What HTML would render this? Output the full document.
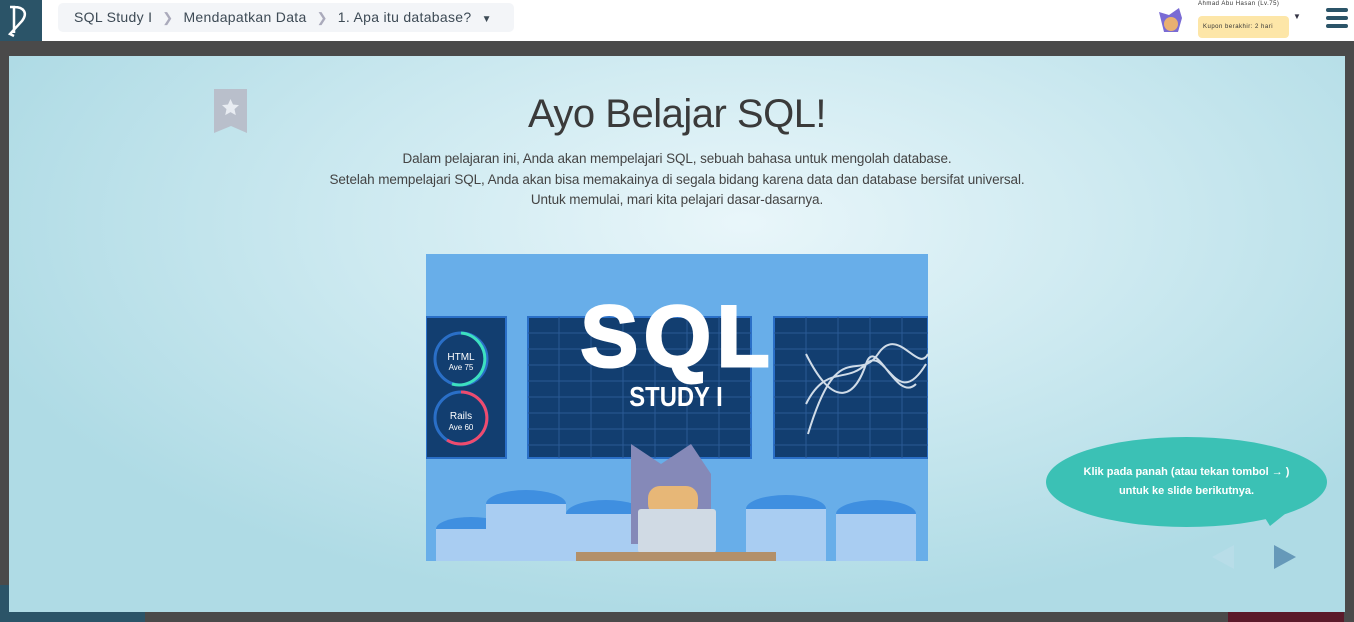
<!DOCTYPE html>
<html><head><meta charset="utf-8"><style>
*{margin:0;padding:0;box-sizing:border-box}
body{width:1354px;height:622px;overflow:hidden;background:#4a4a4a;font-family:"Liberation Sans",sans-serif;position:relative}
.top{position:absolute;left:0;top:0;width:1354px;height:41px;background:#fff}
.logo{position:absolute;left:0;top:0;width:42px;height:41px;background:#2b5468}
.crumb{position:absolute;left:58px;top:3px;width:456px;height:29px;background:#f3f5f8;border-radius:5px;font-size:14px;color:#3d4a55;line-height:29px;padding-left:16px;letter-spacing:.3px}
.crumb .sep{color:#aab;margin:0 10px;font-size:13px}
.modal{position:absolute;left:9px;top:56px;width:1336px;height:556px;background:radial-gradient(ellipse 60% 70% at 55% 30%,#e9f6fa 0%,#cce9f0 50%,#afdbe5 100%)}
h1{position:absolute;left:0;width:1354px;top:92px;text-align:center;font-weight:normal;font-size:40px;color:#3a3a3a;letter-spacing:-.5px}
.desc{position:absolute;left:0;width:1354px;top:149px;text-align:center;font-size:13.5px;color:#444;line-height:20.5px;letter-spacing:-.1px}
.bubble{position:absolute;left:1046px;top:437px;width:281px;height:90px;background:#3bc1b5;border-radius:50%;color:#fff;font-size:11px;font-weight:bold;text-align:center;padding-top:26px;line-height:19px}
</style></head><body>
<div class="top"></div>
<div class="logo"><svg width="42" height="41"><path d="M10 7h4v26M14 7c10 0 14 6 8 14l-12 13 4 2" stroke="#fff" stroke-width="2.5" fill="none"/></svg></div>
<div class="crumb">SQL Study I<span class="sep">❯</span>Mendapatkan Data<span class="sep">❯</span>1. Apa itu database? <span style="font-size:10px;margin-left:6px">▼</span></div>
<svg style="position:absolute;left:1156px;top:6px" width="32" height="30"><path d="M3 6l10 3 10-7 3 10-4 14H8L5 14z" fill="#7a6bd4"/><circle cx="15" cy="18" r="7" fill="#e9b071"/></svg>
<div style="position:absolute;left:1198px;top:1px;font-size:6px;color:#333;letter-spacing:.5px">Ahmad Abu Hasan (Lv.75)</div>
<div style="position:absolute;left:1198px;top:16px;width:91px;height:22px;background:#fde6a8;border-radius:4px;font-size:6px;line-height:22px;padding-left:5px;color:#333;letter-spacing:.5px">Kupon berakhir: 2 hari</div>
<div style="position:absolute;left:1293px;top:12px;font-size:8px;color:#334">▼</div>
<div style="position:absolute;left:1326px;top:8px;width:22px"><div style="height:4px;background:#2b5468;border-radius:2px;margin-bottom:4px"></div><div style="height:4px;background:#2b5468;border-radius:2px;margin-bottom:4px"></div><div style="height:4px;background:#2b5468;border-radius:2px"></div></div>
<div style="position:absolute;left:0;top:585px;width:145px;height:37px;background:#2b5468"></div>
<div style="position:absolute;left:1228px;top:597px;width:116px;height:25px;background:#5a1a2a"></div>
<div class="modal"></div>
<svg style="position:absolute;left:214px;top:89px" width="33" height="44"><path d="M0 0h33v44l-16-7-17 7z" fill="#b9bfcb"/><path d="M16.5 10l2.5 5.5 6 .6-4.5 4 1.3 6-5.3-3-5.3 3 1.3-6-4.5-4 6-.6z" fill="#e8ecf2"/></svg>
<h1>Ayo Belajar SQL!</h1>
<div class="desc">Dalam pelajaran ini, Anda akan mempelajari SQL, sebuah bahasa untuk mengolah database.<br>Setelah mempelajari SQL, Anda akan bisa memakainya di segala bidang karena data dan database bersifat universal.<br>Untuk memulai, mari kita pelajari dasar-dasarnya.</div>
<svg style="position:absolute;left:426px;top:254px" width="502" height="307">
<rect width="502" height="307" fill="#68aee9"/>
<rect x="0" y="63" width="80" height="141" fill="#123e70" stroke="#2a6fc7" stroke-width="2"/>
<circle cx="35" cy="105" r="26" fill="none" stroke="#2a6fc7" stroke-width="3"/><path d="M35 79a26 26 0 1 1-9 51" fill="none" stroke="#3de0c0" stroke-width="3"/>
<circle cx="35" cy="164" r="26" fill="none" stroke="#2a6fc7" stroke-width="3"/><path d="M35 138a26 26 0 1 1-14 48" fill="none" stroke="#ef4b6e" stroke-width="3"/>
<text x="35" y="106" fill="#fff" font-size="10" text-anchor="middle">HTML</text><text x="35" y="116" fill="#fff" font-size="8" text-anchor="middle">Ave 75</text>
<text x="35" y="165" fill="#fff" font-size="10" text-anchor="middle">Rails</text><text x="35" y="176" fill="#fff" font-size="8" text-anchor="middle">Ave 60</text>
<rect x="102" y="63" width="223" height="141" fill="#123e70" stroke="#2a6fc7" stroke-width="2"/>
<g stroke="#2a5a95" stroke-width="1"><path d="M102 79h223M102 95h223M102 111h223M102 127h223M102 143h223M102 159h223M102 175h223M102 191h223M133 63v141M165 63v141M197 63v141M229 63v141M261 63v141M293 63v141"/></g>
<rect x="348" y="63" width="154" height="141" fill="#123e70" stroke="#2a6fc7" stroke-width="2"/>
<g stroke="#2a5a95" stroke-width="1"><path d="M348 79h154M348 95h154M348 111h154M348 127h154M348 143h154M348 159h154M348 175h154M348 191h154M380 63v141M412 63v141M444 63v141M476 63v141"/></g>
<path d="M380 100c30 60 50 40 60 10s30 40 50 20M380 150c20-40 40-20 60-40s30 50 60 0M382 180c30-100 50-50 70-80s40 20 50 0" stroke="#d0dce8" stroke-width="2" fill="none"/>
<g fill="#3f8fe0"><ellipse cx="100" cy="250" rx="40" ry="14"/><ellipse cx="45" cy="275" rx="35" ry="12"/><ellipse cx="180" cy="260" rx="40" ry="14"/><ellipse cx="140" cy="285" rx="35" ry="12"/><ellipse cx="360" cy="255" rx="40" ry="14"/><ellipse cx="450" cy="260" rx="40" ry="14"/></g>
<g fill="#a9cdf2"><rect x="60" y="250" width="80" height="57"/><rect x="10" y="275" width="70" height="32"/><rect x="140" y="260" width="80" height="47"/><rect x="320" y="255" width="80" height="52"/><rect x="410" y="260" width="80" height="47"/></g>
<text x="252" y="112" fill="#fff" font-size="86" font-weight="bold" text-anchor="middle" letter-spacing="6" stroke="#fff" stroke-width="3">SQL</text>
<text x="250" y="152" fill="#fff" font-size="28" font-weight="bold" text-anchor="middle" transform="translate(250 0) scale(0.85 1) translate(-250 0)">STUDY I</text>
<path d="M205 190l30 20 30-20 20 30 0 70h-80v-70z" fill="#8589b8"/>
<rect x="222" y="232" width="50" height="30" rx="12" fill="#e7b777"/>
<rect x="212" y="255" width="78" height="44" rx="3" fill="#d0dae4"/>
<rect x="150" y="298" width="200" height="9" fill="#b3906a"/>
</svg>
<div class="bubble">Klik pada panah (atau tekan tombol → )<br>untuk ke slide berikutnya.</div>
<svg style="position:absolute;left:1260px;top:510px" width="30" height="20"><path d="M0 0l10 16 20-16z" fill="#3bc1b5"/></svg>
<svg style="position:absolute;left:1210px;top:544px" width="90" height="26"><path d="M24 1v24L2 13z" fill="#b8dde8"/><path d="M64 1v24l22-12z" fill="#6699b9"/></svg>
</body></html>
